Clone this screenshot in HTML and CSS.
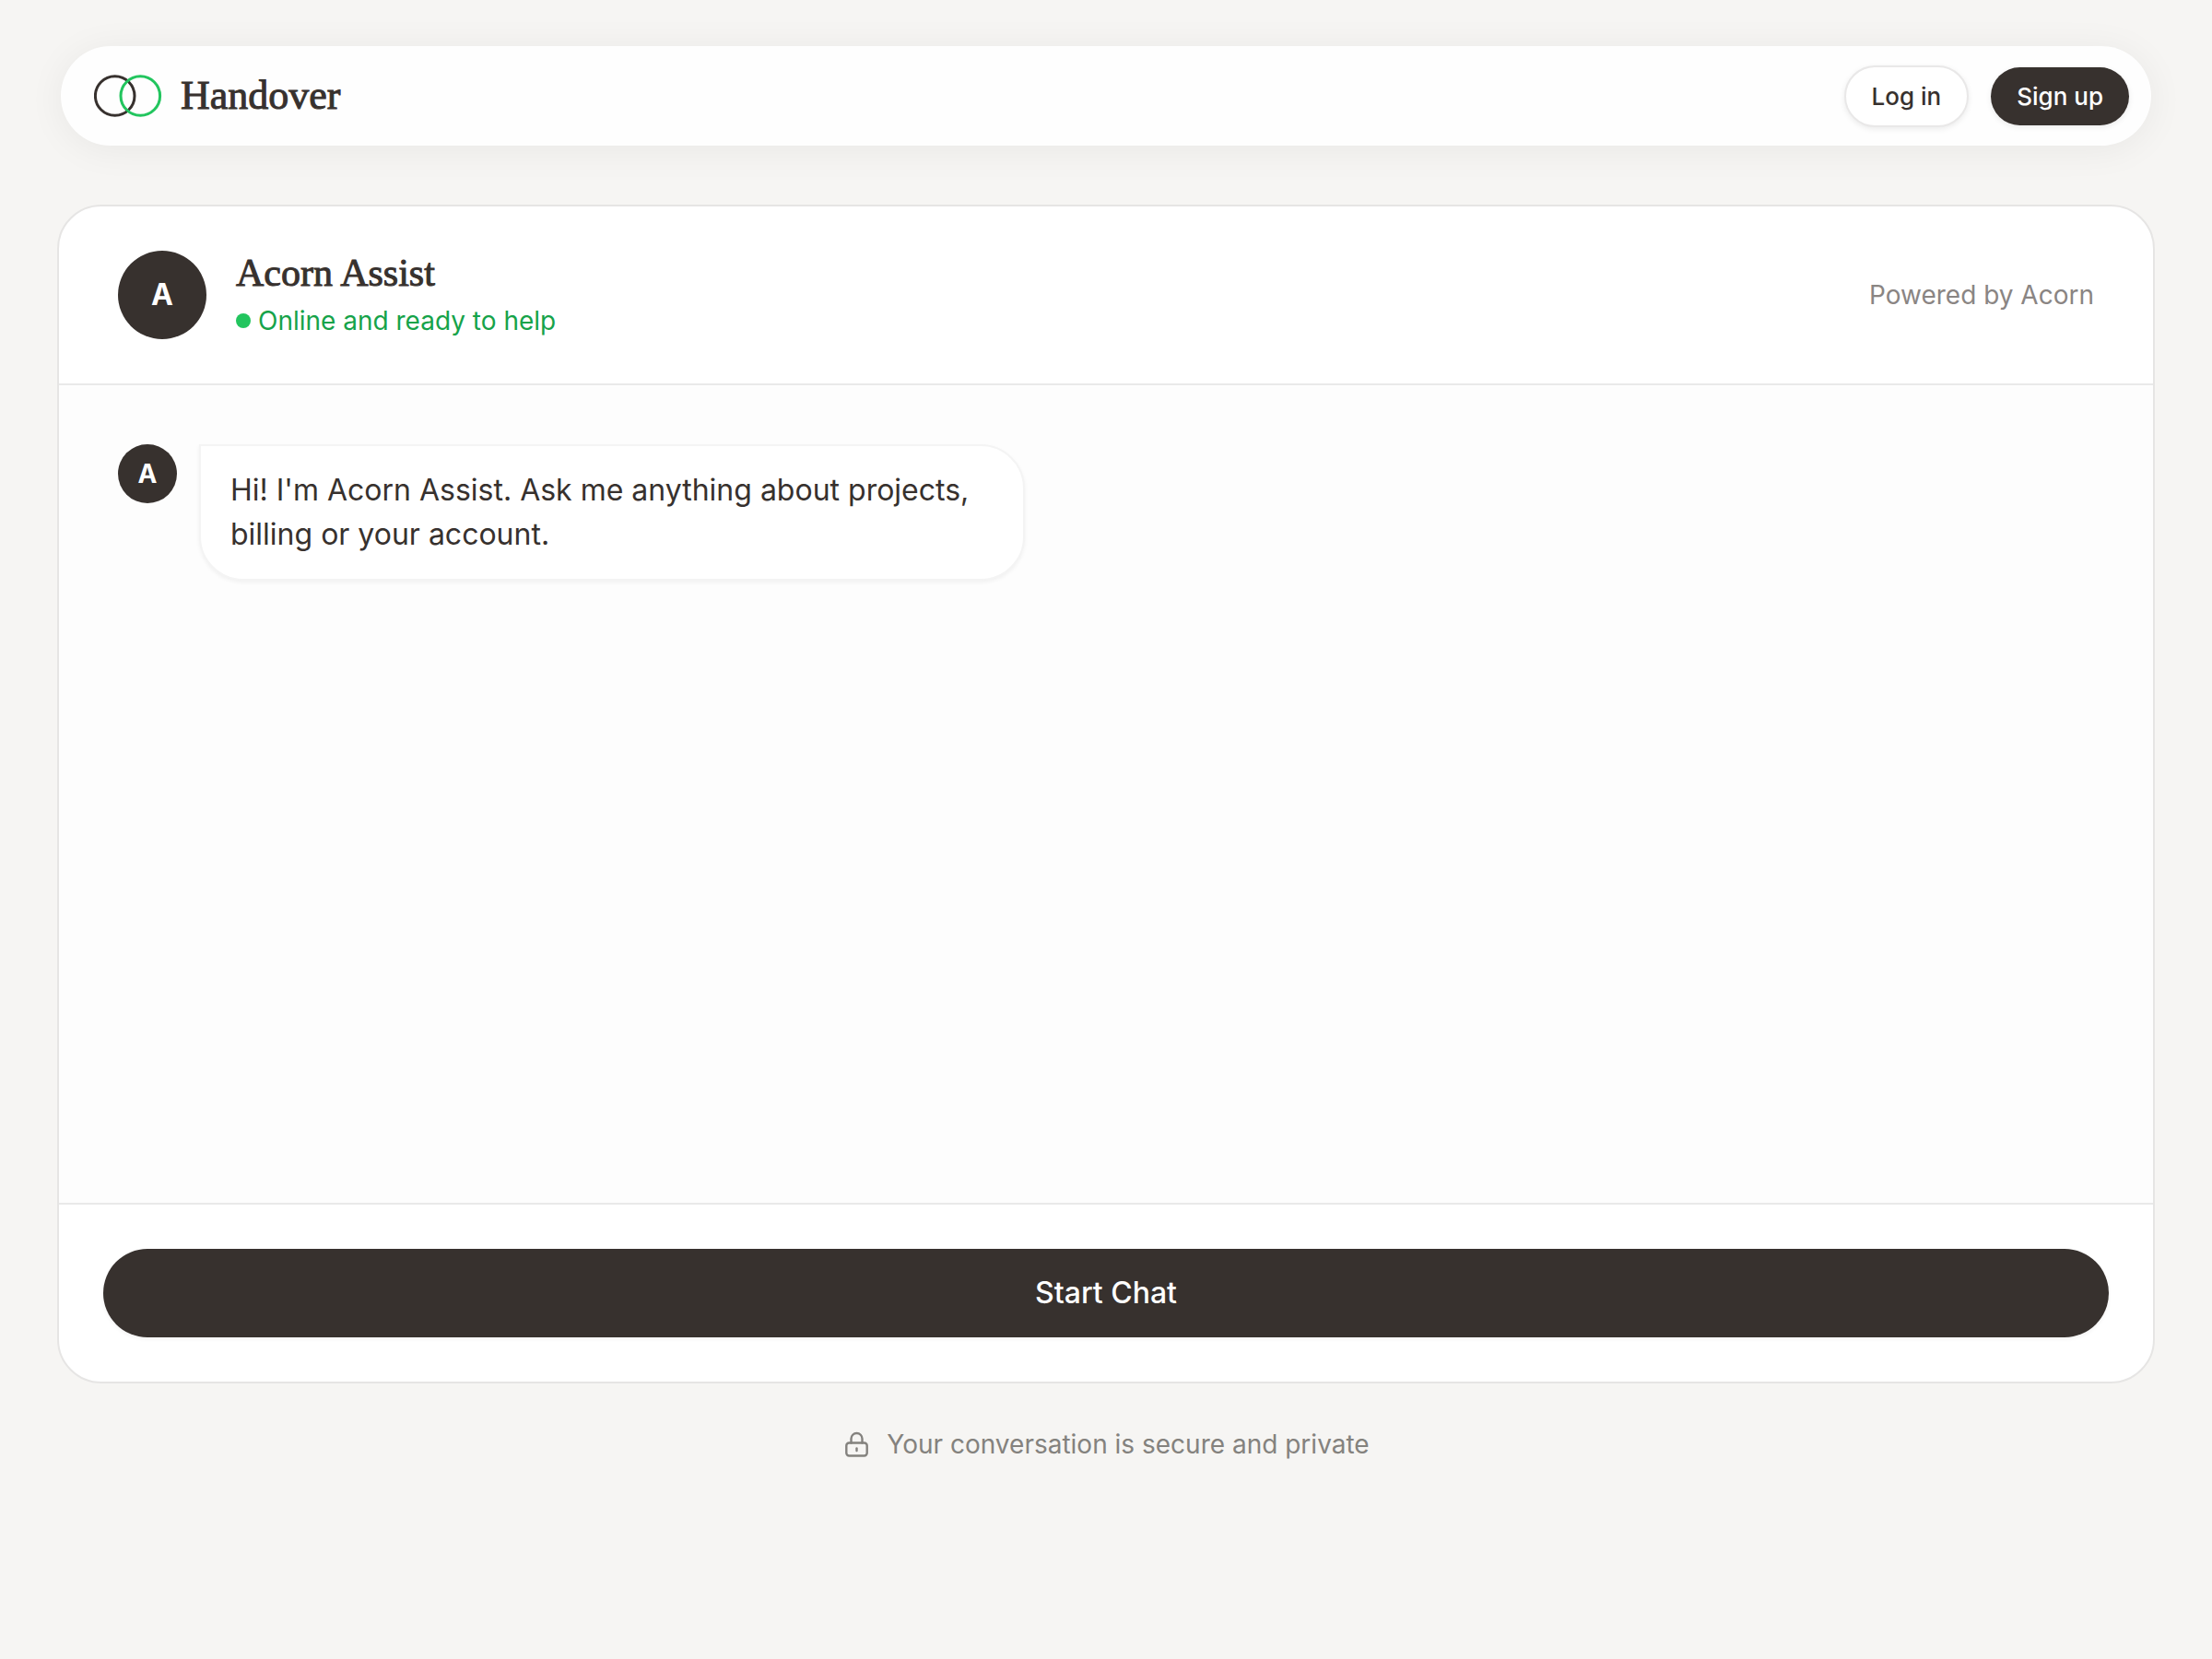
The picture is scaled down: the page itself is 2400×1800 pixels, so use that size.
FILE: index.html
```html
<!DOCTYPE html>
<html lang="en">
<head>
    <meta charset="UTF-8">
    <meta name="viewport" content="width=device-width, initial-scale=1.0">
    <title>Acorn Assist | Handover</title>
    <link rel="stylesheet" href="styles.css">
</head>
<body>
    <header class="navbar">
        <a class="brand" href="#">
            <svg class="brand-logo" viewBox="0 0 74 48" fill="none" stroke-width="3" aria-hidden="true">
                <circle cx="22.7" cy="24" r="21.3" stroke="#37312e"/>
                <circle cx="50.3" cy="24" r="21.3" stroke="#22c55e"/>
            </svg>
            <span class="brand-name">Handover</span>
        </a>
        <nav class="nav-actions">
            <button class="btn btn-light" type="button">Log in</button>
            <button class="btn btn-dark" type="button">Sign up</button>
        </nav>
    </header>

    <main class="chat">
        <div class="chat-header">
            <div class="avatar avatar-large">A</div>
            <div class="agent">
                <h1>Acorn Assist</h1>
                <p class="status"><span class="dot"></span>Online and ready to help</p>
            </div>
            <p class="powered">Powered by Acorn</p>
        </div>
        <div class="messages">
            <div class="message">
                <div class="avatar">A</div>
                <p class="bubble">Hi! I'm Acorn Assist. Ask me anything about projects, billing or your account.</p>
            </div>
        </div>
        <div class="chat-footer">
            <button class="start" type="button">Start Chat</button>
        </div>
    </main>

    <footer class="secure">
        <svg class="lock" viewBox="0 0 32 32" fill="none" stroke="currentColor" stroke-width="2.4" stroke-linecap="round" stroke-linejoin="round" aria-hidden="true">
            <rect x="4.300" y="14.500" width="22.400" height="14" rx="3"/>
            <path d="M9.500 14.500V10a6 6 0 0 1 12 0v4.500"/>
            <path d="M15.500 20.500v2.500"/>
        </svg>
        <span>Your conversation is secure and private</span>
    </footer>
</body>
</html>
```
FILE: styles.css
```css
* {
    box-sizing: border-box;
}
body {
    margin: 0;
    padding: 50px 62px 64px;
    font-family: Inter, "Liberation Sans", sans-serif;
    font-size: 28px;
    line-height: 40px;
    color: #37312e;
    background: #f6f5f3;
}
h1, p {
    margin: 0;
}
button {
    font-family: inherit;
    font-weight: 500;
    cursor: pointer;
}
.navbar {
    display: flex;
    align-items: center;
    justify-content: space-between;
    height: 108px;
    margin: 0 4px 64px;
    padding: 0 24px 0 36px;
    background: #fefefe;
    border-radius: 54px;
    box-shadow: 0 4px 40px rgba(0, 0, 0, 0.06);
}
.brand {
    display: flex;
    align-items: center;
    gap: 20px;
    color: inherit;
    text-decoration: none;
}
.brand-logo {
    width: 74px;
    height: 48px;
}
.brand-name {
    font-family: "Liberation Serif", serif;
    font-size: 44px;
    line-height: 56px;
    -webkit-text-stroke: 1px currentColor;
}
.nav-actions {
    display: flex;
    align-items: center;
    gap: 24px;
}
.btn {
    padding: 13px 28px 12px;
    font-size: 26px;
    line-height: 38px;
    border: none;
    border-radius: 34px;
    box-shadow: 0 2px 6px rgba(0, 0, 0, 0.08);
}
.btn-light {
    color: #37312e;
    background: #fff;
    border: 2px solid #e9e8e8;
}
.btn-dark {
    color: #fff;
    background: #37312e;
}
.chat {
    background: #fff;
    border: 2px solid #e6e5e4;
    border-radius: 48px;
    overflow: hidden;
}
.chat-header {
    display: flex;
    align-items: center;
    gap: 32px;
    padding: 48px 64px;
    border-bottom: 2px solid #e9e9e9;
}
.avatar {
    display: flex;
    flex-shrink: 0;
    align-items: center;
    justify-content: center;
    width: 64px;
    height: 64px;
    font-weight: 700;
    color: #fff;
    background: #37312e;
    border-radius: 50%;
}
.avatar-large {
    width: 96px;
    height: 96px;
    font-size: 32px;
}
.agent {
    flex: 1;
}
h1 {
    margin-bottom: 8px;
    font-family: "Liberation Serif", serif;
    font-size: 42px;
    font-weight: 400;
    line-height: 48px;
    -webkit-text-stroke: 1px currentColor;
}
.status {
    display: flex;
    align-items: center;
    gap: 8px;
    color: #16a34a;
}
.dot {
    width: 16px;
    height: 16px;
    background: #22c55e;
    border-radius: 50%;
}
.powered {
    color: #8a8583;
}
.messages {
    min-height: 887px;
    padding: 64px;
    background: #fdfdfd;
}
.message {
    display: flex;
    align-items: flex-start;
    gap: 24px;
}
.bubble {
    max-width: 896px;
    padding: 24px 32px;
    font-size: 32px;
    line-height: 48px;
    background: #fff;
    border: 2px solid #f4f4f4;
    border-radius: 0 48px 48px 48px;
    box-shadow: 0 2px 4px rgba(0, 0, 0, 0.05);
}
.chat-footer {
    padding: 48px;
    border-top: 2px solid #e9e9e9;
}
.start {
    display: block;
    width: 100%;
    padding: 24px;
    font-size: 32px;
    line-height: 48px;
    color: #fff;
    background: #37312e;
    border: none;
    border-radius: 48px;
    box-shadow: 0 2px 4px rgba(0, 0, 0, 0.05);
}
.secure {
    display: flex;
    align-items: center;
    justify-content: center;
    gap: 16px;
    margin-top: 46px;
    color: #84827e;
}
.lock {
    width: 32px;
    height: 32px;
}
```
